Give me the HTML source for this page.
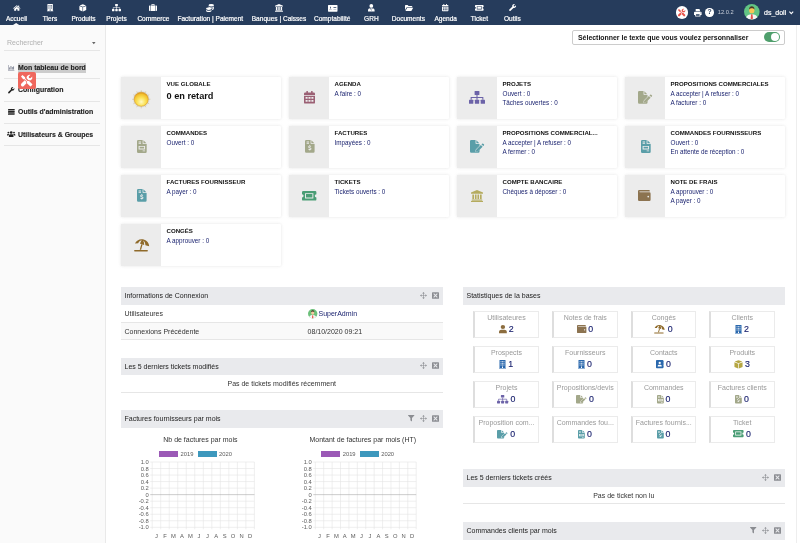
<!DOCTYPE html>
<html lang="fr"><head><meta charset="utf-8"><title>Accueil - Dolibarr 12.0.2</title>
<style>
html,body{margin:0;padding:0;}
body{width:800px;height:543px;overflow:hidden;position:relative;background:#fff;font-family:"Liberation Sans",Arial,sans-serif;font-size:7px;color:#222;}
div,span,a{position:absolute;white-space:nowrap;box-sizing:border-box;}
svg{position:absolute;overflow:visible;}
.top{left:0;top:0;width:800px;height:24.8px;background:#263c5c;}
.mi{color:#fff;font-size:6.55px;-webkit-text-stroke:.2px #fff;top:13.5px;height:9px;line-height:9px;transform:translateX(-50%);}
.side{left:0;top:24.8px;width:105.5px;height:519px;background:#fafafa;border-right:1px solid #e9e9e9;}
.sl{left:4px;width:96px;height:1px;background:#e6e6e6;}
.sm{left:18px;font-weight:bold;font-size:6.95px;-webkit-text-stroke:.12px #222;height:9px;line-height:9px;color:#222;}
.card{width:160.3px;height:41.4px;background:#fff;box-shadow:0 0 3px rgba(160,160,160,.3);border-radius:1px;}
.ci{left:0;top:0;width:40.2px;height:41.4px;background:#ececec;}
.ct{left:45.5px;top:2.9px;font-size:6.1px;font-weight:bold;line-height:8px;color:#111;}
.cl{left:45.5px;font-size:6.3px;line-height:8px;color:#1c2470;}
.bh{height:18px;background:#e9eaed;font-size:7px;line-height:18px;color:#222;padding-left:4px;}
.row{font-size:7px;line-height:17px;height:17.5px;color:#333;border-bottom:1px solid #e6e6e6;}
.st{width:65.5px;height:27.2px;border:1px solid #ebebeb;border-left:2.800px solid #dedede;background:#fff;}
.stl{left:0;width:100%;top:2.2px;text-align:center;font-size:7px;line-height:8px;color:#999;}
.stv{top:11.8px;font-size:8.8px;line-height:11px;color:#1c2470;-webkit-text-stroke:.15px #1c2470;}
.ax{font-size:5.8px;color:#5c5c5c;line-height:6px;}
</style></head><body><div id="wrap" style="left:0;top:0;width:800px;height:543px;will-change:transform">

<div class="top">
<svg style="left:12.70px;top:4.94px;color:#fff" width="7.60" height="5.91" viewBox="0 0 18 14" preserveAspectRatio="none" fill="currentColor"><path d="M9 .4 .2 7.8l1.1 1.3L9 2.7l7.7 6.4 1.1-1.3-3.2-2.7V1.4h-2.1v2z"/><path d="M9 4 2.8 9.1v4.5h4.6V9.9h3.2v3.7h4.6V9.1z"/></svg>
<span class="mi" style="left:16.5px">Accueil</span>
<svg style="left:46.85px;top:4.20px;color:#fff" width="6.30" height="7.20" viewBox="0 0 14 16" preserveAspectRatio="none" fill="currentColor"><path fill-rule="evenodd" d="M1 0h12v15h1v1H0v-1h1zM3.200 2.200v1.600h1.800V2.200zM6.100 2.200v1.600h1.800V2.200zM9 2.200v1.600h1.800V2.200zM3.200 5.400v1.600h1.800V5.400zM6.100 5.400v1.600h1.800V5.400zM9 5.400v1.600h1.800V5.400zM3.200 8.600v1.600h1.800V8.600zM6.100 8.600v1.600h1.800V8.600zM9 8.600v1.600h1.800V8.600zM6 12.200v2.800h2v-2.800z"/></svg>
<span class="mi" style="left:50px">Tiers</span>
<svg style="left:79.20px;top:4.00px;color:#fff" width="7.60" height="7.60" viewBox="0 0 16 16" preserveAspectRatio="none" fill="currentColor"><path d="M8 .3 14.7 3 8 5.9 1.3 3z"/><path d="M.8 4.2 7.4 7v8.8L.8 12.8z"/><path d="M15.2 4.2 8.6 7v8.8l6.6-3z"/></svg>
<span class="mi" style="left:83.5px">Produits</span>
<svg style="left:112.20px;top:4.20px;color:#fff" width="9.00" height="7.20" viewBox="0 0 20 16" preserveAspectRatio="none" fill="currentColor"><rect x="7" y="0" width="6" height="5" rx=".7"/><rect x="0" y="11" width="5.4" height="5" rx=".7"/><rect x="7.3" y="11" width="5.4" height="5" rx=".7"/><rect x="14.6" y="11" width="5.4" height="5" rx=".7"/><path d="M10 5v6M2.7 11V8h14.6v3" fill="none" stroke="currentColor" stroke-width="1.3"/></svg>
<span class="mi" style="left:116.5px">Projets</span>
<svg style="left:149.00px;top:4.40px;color:#fff" width="8.00" height="7.00" viewBox="0 0 16 14" preserveAspectRatio="none" fill="currentColor"><path d="M4.8 3V1.3A1.3 1.3 0 0 1 6.1 0h3.8a1.3 1.3 0 0 1 1.3 1.3V3H9.7V1.5H6.3V3z"/><path d="M1.3 3H3v11H1.3A1.3 1.3 0 0 1 0 12.7V4.3A1.3 1.3 0 0 1 1.3 3z"/><rect x="3.9" y="3" width="8.2" height="11"/><path d="M13 3h1.7A1.3 1.3 0 0 1 16 4.300v8.400a1.3 1.300 0 0 1-1.3 1.300H13z"/></svg>
<span class="mi" style="left:153.4px">Commerce</span>
<svg style="left:206.30px;top:3.80px;color:#fff" width="8.00" height="8.00" viewBox="0 0 16 16" preserveAspectRatio="none" fill="currentColor"><ellipse cx="10.500" cy="2.600" rx="5.500" ry="2.500"/><path d="M5 4.600c.5 1.600 2.800 2.400 5.500 2.400s5-.8 5.500-2.400v2c0 1.400-2.500 2.500-5.500 2.500S5 8 5 6.600z"/><ellipse cx="5.500" cy="9.500" rx="5.500" ry="2.300"/><path d="M0 11.300c.6 1.500 2.800 2.300 5.500 2.300s4.900-.8 5.500-2.300v2.100c0 1.400-2.500 2.500-5.500 2.500S0 14.800 0 13.400z"/><path d="M11.800 9.700c2-.2 3.700-.9 4.200-2v1.900c0 1-1.700 2-4.200 2.300z"/></svg>
<span class="mi" style="left:210.3px">Facturation | Paiement</span>
<svg style="left:274.90px;top:3.90px;color:#fff" width="8.00" height="8.00" viewBox="0 0 16 16" preserveAspectRatio="none" fill="currentColor"><path d="M8 0 16 3.300V5H0V3.300z"/><rect x="1.800" y="6" width="2.200" height="6.200"/><rect x="5.200" y="6" width="2.200" height="6.200"/><rect x="8.600" y="6" width="2.200" height="6.200"/><rect x="12" y="6" width="2.200" height="6.200"/><rect x="1" y="12.700" width="14" height="1.500"/><rect x="0" y="14.600" width="16" height="1.400"/></svg>
<span class="mi" style="left:279px">Banques | Caisses</span>
<svg style="left:327.85px;top:4.58px;color:#fff" width="9.50" height="6.65" viewBox="0 0 20 14" preserveAspectRatio="none" fill="currentColor"><path fill-rule="evenodd" d="M1.200 0h17.600A1.200 1.200 0 0 1 20 1.200v11.600a1.200 1.200 0 0 1-1.200 1.200H1.200A1.200 1.200 0 0 1 0 12.800V1.200A1.200 1.200 0 0 1 1.200 0zM2.500 9.800v1h5.500v-1zM11.500 9.800v1h6v-1zM11.500 4.600v1.600h6V4.600zM4.500 3.500v3.800h1.600V3.500z"/></svg>
<span class="mi" style="left:332.2px">Comptabilité</span>
<svg style="left:367.80px;top:4.03px;color:#fff" width="6.60" height="7.54" viewBox="0 0 14 16" preserveAspectRatio="none" fill="currentColor"><circle cx="7" cy="4" r="4"/><path d="M0 16v-2.300C0 11 2 9.300 4.400 9.200L7 14.500 9.600 9.200C12 9.300 14 11 14 13.700V16z"/><path d="M6 9.200h2l.5 1L7 13.200 5.500 10.200z"/></svg>
<span class="mi" style="left:371.4px">GRH</span>
<svg style="left:404.50px;top:5.04px;color:#fff" width="8.20" height="5.92" viewBox="0 0 18 13" preserveAspectRatio="none" fill="currentColor"><path d="M0 1.500A1.500 1.500 0 0 1 1.500 0h4.300l2 2h6.700A1.500 1.500 0 0 1 16 3.500V5H4.600a2 2 0 0 0-1.800 1.100L0 11.500z"/><path d="M4.800 6H18l-3.300 6.200a1.500 1.500 0 0 1-1.300.8H1z"/></svg>
<span class="mi" style="left:408.4px">Documents</span>
<svg style="left:442.40px;top:4.34px;color:#fff" width="6.40" height="7.31" viewBox="0 0 14 16" preserveAspectRatio="none" fill="currentColor"><path d="M0 3.500A1.500 1.500 0 0 1 1.500 2H3V.4A.4.4 0 0 1 3.400 0h1.200a.4.4 0 0 1 .4.400V2h4V.4A.4.4 0 0 1 9.400 0h1.200a.4.4 0 0 1 .4.400V2h1.500A1.500 1.500 0 0 1 14 3.500V5H0z"/><path fill-rule="evenodd" d="M0 6h14v8.500a1.500 1.500 0 0 1-1.500 1.500h-11A1.500 1.500 0 0 1 0 14.500zM2 7.600v2.200h2.600V7.600zM5.700 7.600v2.200h2.600V7.600zM9.400 7.600v2.200H12V7.600zM2 11.400v2.200h2.600v-2.200zM5.700 11.400v2.200h2.600v-2.200zM9.400 11.400v2.200H12v-2.200z"/></svg>
<span class="mi" style="left:445.7px">Agenda</span>
<svg style="left:475.20px;top:5.13px;color:#fff" width="8.60" height="5.73" viewBox="0 0 18 12" preserveAspectRatio="none" fill="currentColor"><path fill-rule="evenodd" d="M0 1.500A1.500 1.500 0 0 1 1.500 0h15A1.500 1.500 0 0 1 18 1.500V4a2 2 0 0 0 0 4v2.500a1.500 1.500 0 0 1-1.500 1.500h-15A1.500 1.500 0 0 1 0 10.500V8a2 2 0 0 0 0-4zM3.800 2.700v6.600h10.400V2.700zM5 3.900h8v4.200H5z"/></svg>
<span class="mi" style="left:479.4px">Ticket</span>
<svg style="left:508.70px;top:4.40px;color:#fff" width="7.20" height="7.20" viewBox="0 0 16 16" preserveAspectRatio="none" fill="currentColor"><path d="M13.300.5A4.600 4.600 0 0 0 7.200 6L.7 12.500a2 2 0 0 0 2.800 2.800L10 8.800a4.600 4.600 0 0 0 5.500-6.100L12.700 5.500l-2-.3-.3-2z"/></svg>
<span class="mi" style="left:512.4px">Outils</span>
<svg style="left:13.400px;top:22.900px" width="6.200" height="2" viewBox="0 0 62 20"><path d="M0 20 31 0 62 20z" fill="#fafafa"/></svg>
<div style="left:675.8px;top:6.4px;width:12.4px;height:12.4px;border-radius:50%;background:#fff"></div>
<svg style="left:678.30px;top:8.90px;color:#e8534a" width="7.40" height="7.40" viewBox="0 0 16 16" preserveAspectRatio="none" fill="currentColor"><path d="M15.600 12.500 11.800 8.700a2.400 2.400 0 0 0-2.700-.4L5.800 5V3L2 0 0 2l3 3.800h2l3.300 3.300a2.400 2.400 0 0 0 .4 2.700l3.800 3.800a1.200 1.200 0 0 0 1.700 0l1.400-1.400a1.200 1.200 0 0 0 0-1.700z"/><path d="M10.500 6.900c.9 0 1.800.3 2.500.900l.7-.7a4.400 4.400 0 0 0 2.100-5l-2.500 2.500-2.100-.3-.3-2.100L13.400-.3a4.400 4.400 0 0 0-5 2.100 4.400 4.400 0 0 0-.5 2.900l2.300 2.300zM7 9.100 5.300 7.400.6 12.100a2.300 2.300 0 0 0 3.300 3.300l3.800-3.800a3.500 3.500 0 0 1-.7-2.500z"/></svg>
<svg style="left:693.80px;top:8.90px;color:#fff" width="7.60" height="7.60" viewBox="0 0 16 16" preserveAspectRatio="none" fill="currentColor"><path d="M3.500 0h7.300L12.500 1.700V5h-9z"/><path fill-rule="evenodd" d="M1.800 6h12.400A1.800 1.800 0 0 1 16 7.800V12.500h-2.500V16h-11v-3.500H0V7.800A1.800 1.800 0 0 1 1.800 6zM4.300 10.800v3.600h7.400v-3.600zM13.300 7.600a.8.800 0 1 0 0 1.600.8.800 0 0 0 0-1.600z"/></svg>
<div style="left:705.300px;top:8.300px;width:8.400px;height:8.400px;border-radius:50%;background:#fff"></div>
<span style="left:705.300px;top:8.300px;width:8.400px;height:8.400px;line-height:8.800px;text-align:center;font-size:6.800px;font-weight:bold;color:#263c5c">?</span>
<span style="left:717.800px;top:9.100px;font-size:5.700px;line-height:7px;color:#c9cfda">12.0.2</span>
<svg style="left:743.800px;top:4.400px" width="15.600" height="15.600" viewBox="0 0 16 16"><circle cx="8" cy="8" r="8" fill="#62c584"/><path d="M2.2 13.5C3 11.300 5 10.400 8 10.400s5 .9 5.800 3.100A8 8 0 0 1 8 16a8 8 0 0 1-5.800-2.500z" fill="#f4f4f4"/><path d="M7.300 10.500h1.400l.5 4.500-1.200 1-1.200-1z" fill="#e8534a"/><ellipse cx="8" cy="6.300" rx="2.700" ry="3.300" fill="#f8c756"/><path d="M5.200 5.600C5.200 3 6.500 2.200 8 2.200s2.800.8 2.800 3.400C10 4.600 9 4.300 8 4.300s-2 .3-2.800 1.300z" fill="#4a3a2a"/></svg>
<span style="left:764px;top:8.100px;font-size:7px;line-height:9px;color:#fff;-webkit-text-stroke:.2px #fff">ds_doli</span>
<svg style="left:789.200px;top:10.800px" width="4.600" height="3.400" viewBox="0 0 46 34"><path d="M4 6 23 26 42 6" fill="none" stroke="#fff" stroke-width="11"/></svg>
</div>
<div class="side">
<span style="left:7px;top:13.7px;font-size:7px;color:#b0b0b0;line-height:9px">Rechercher</span>
<svg style="left:91.7px;top:17.500px" width="3.600" height="2.200" viewBox="0 0 36 22"><path d="M0 0H36L18 22z" fill="#666"/></svg>
<div class="sl" style="top:24.8px"></div>
<div class="sl" style="top:53.1px"></div>
<div class="sl" style="top:76.1px"></div>
<div class="sl" style="top:98.2px"></div>
<div class="sl" style="top:120.3px"></div>
<span style="left:17.800px;top:38.500px;width:68.200px;height:9.300px;background:#ccc"></span>
<svg style="left:8.00px;top:40.10px;color:#7a7f90" width="6.40" height="5.60" viewBox="0 0 16 14" preserveAspectRatio="none" fill="currentColor"><path d="M0 0h1.300v12.700H16V14H0z"/><rect x="3" y="6" width="2.200" height="5.500"/><rect x="6.300" y="2.500" width="2.200" height="9"/><rect x="9.600" y="5" width="2.200" height="6.500"/><rect x="12.900" y="3.500" width="2.200" height="8"/></svg>
<span class="sm" style="top:38.1px">Mon tableau de bord</span>
<svg style="left:7.75px;top:61.85px;color:#222" width="6.50" height="6.50" viewBox="0 0 16 16" preserveAspectRatio="none" fill="currentColor"><path d="M13.300.5A4.600 4.600 0 0 0 7.200 6L.7 12.500a2 2 0 0 0 2.800 2.800L10 8.800a4.600 4.600 0 0 0 5.500-6.100L12.700 5.500l-2-.3-.3-2z"/></svg>
<span class="sm" style="top:60.4px">Configuration</span>
<svg style="left:7.70px;top:84.41px;color:#222" width="6.60" height="5.77" viewBox="0 0 16 14" preserveAspectRatio="none" fill="currentColor"><rect x="0" y="0" width="16" height="3.800" rx=".6"/><rect x="0" y="5.100" width="16" height="3.800" rx=".6"/><rect x="0" y="10.200" width="16" height="3.800" rx=".6"/></svg>
<span class="sm" style="top:82.6px">Outils d'administration</span>
<svg style="left:6.80px;top:106.56px;color:#222" width="8.40" height="5.88" viewBox="0 0 20 14" preserveAspectRatio="none" fill="currentColor"><circle cx="10" cy="3.500" r="3.200"/><path d="M4.500 14v-2.200C4.500 9.400 6.300 8 8.300 8h3.400c2 0 3.800 1.400 3.800 3.800V14z"/><circle cx="3.300" cy="3.800" r="2.200"/><circle cx="16.700" cy="3.800" r="2.200"/><path d="M0 11V9.800C0 8.300 1 7.200 2.500 7.200h1.600c.5 0 1 .1 1.400.4C4.300 8.300 3.500 9.600 3.400 11zM20 11V9.800c0-1.500-1-2.600-2.500-2.600h-1.600c-.5 0-1 .1-1.400.4 1.200.7 2 2 2.100 3.400z"/></svg>
<span class="sm" style="top:104.8px">Utilisateurs &amp; Groupes</span>
<div style="left:18px;top:47.200px;width:18px;height:17.500px;background:#ef675d;border-radius:2px"></div>
<svg style="left:21.40px;top:49.90px;color:#fff" width="11.40" height="11.40" viewBox="0 0 16 16" preserveAspectRatio="none" fill="currentColor"><path d="M15.600 12.500 11.800 8.700a2.400 2.400 0 0 0-2.700-.4L5.800 5V3L2 0 0 2l3 3.800h2l3.300 3.300a2.400 2.400 0 0 0 .4 2.700l3.800 3.800a1.200 1.200 0 0 0 1.700 0l1.400-1.400a1.200 1.200 0 0 0 0-1.700z"/><path d="M10.500 6.900c.9 0 1.800.3 2.500.900l.7-.7a4.400 4.400 0 0 0 2.100-5l-2.500 2.500-2.100-.3-.3-2.100L13.400-.3a4.400 4.400 0 0 0-5 2.100 4.400 4.400 0 0 0-.5 2.900l2.300 2.300zM7 9.100 5.300 7.400.6 12.100a2.300 2.300 0 0 0 3.300 3.300l3.800-3.800a3.500 3.500 0 0 1-.7-2.500z"/></svg>
</div>
<div style="left:795.600px;top:24.800px;width:1px;height:519px;background:#eee"></div>
<div style="left:572px;top:30px;width:213px;height:14.5px;border:1px solid #ccc;border-radius:2px;background:#fff"></div>
<span style="left:578px;top:32.5px;font-size:6.93px;font-weight:bold;line-height:9px;color:#111">Sélectionner le texte que vous voulez personnaliser</span>
<div style="left:763.5px;top:32.4px;width:16.5px;height:9.6px;border-radius:5px;background:#4f9f6c"></div>
<div style="left:771.3px;top:33.4px;width:7.6px;height:7.6px;border-radius:4px;background:#fff"></div>
<div class="card" style="left:121px;top:77.2px"><div class="ci"></div>
<svg style="left:11.100px;top:12.700px" width="18.500" height="18.500" viewBox="-10 -10 20 20"><defs><radialGradient id="sg" cx="50%" cy="68%" r="62%"><stop offset="0" stop-color="#fff9c4"/><stop offset=".45" stop-color="#fbe45e"/><stop offset=".85" stop-color="#f4c22e"/><stop offset="1" stop-color="#e0a024"/></radialGradient></defs><line x1="0" y1="-7.500" x2="0" y2="-10" stroke="#c9b98a" stroke-width=".7" opacity=".7" transform="rotate(0)"/><line x1="0" y1="-7.500" x2="0" y2="-10" stroke="#c9b98a" stroke-width=".7" opacity=".7" transform="rotate(30)"/><line x1="0" y1="-7.500" x2="0" y2="-10" stroke="#c9b98a" stroke-width=".7" opacity=".7" transform="rotate(60)"/><line x1="0" y1="-7.500" x2="0" y2="-10" stroke="#c9b98a" stroke-width=".7" opacity=".7" transform="rotate(90)"/><line x1="0" y1="-7.500" x2="0" y2="-10" stroke="#c9b98a" stroke-width=".7" opacity=".7" transform="rotate(120)"/><line x1="0" y1="-7.500" x2="0" y2="-10" stroke="#c9b98a" stroke-width=".7" opacity=".7" transform="rotate(150)"/><line x1="0" y1="-7.500" x2="0" y2="-10" stroke="#c9b98a" stroke-width=".7" opacity=".7" transform="rotate(180)"/><line x1="0" y1="-7.500" x2="0" y2="-10" stroke="#c9b98a" stroke-width=".7" opacity=".7" transform="rotate(210)"/><line x1="0" y1="-7.500" x2="0" y2="-10" stroke="#c9b98a" stroke-width=".7" opacity=".7" transform="rotate(240)"/><line x1="0" y1="-7.500" x2="0" y2="-10" stroke="#c9b98a" stroke-width=".7" opacity=".7" transform="rotate(270)"/><line x1="0" y1="-7.500" x2="0" y2="-10" stroke="#c9b98a" stroke-width=".7" opacity=".7" transform="rotate(300)"/><line x1="0" y1="-7.500" x2="0" y2="-10" stroke="#c9b98a" stroke-width=".7" opacity=".7" transform="rotate(330)"/><circle r="9" fill="#8a8a7a" opacity=".13"/><circle r="7.600" fill="url(#sg)" stroke="#d9971f" stroke-width=".6"/></svg>
<span class="ct">VUE GLOBALE</span>
<span style="left:45.5px;top:14px;font-size:9.2px;font-weight:bold;line-height:11px;color:#111">0 en retard</span>
</div>
<div class="card" style="left:289px;top:77.2px"><div class="ci"></div>
<svg style="left:14.80px;top:14.21px;color:#9b6074" width="11.00" height="12.57" viewBox="0 0 14 16" preserveAspectRatio="none" fill="currentColor"><path d="M0 3.500A1.500 1.500 0 0 1 1.500 2H3V.4A.4.4 0 0 1 3.400 0h1.200a.4.4 0 0 1 .4.400V2h4V.4A.4.4 0 0 1 9.400 0h1.200a.4.4 0 0 1 .4.400V2h1.500A1.500 1.500 0 0 1 14 3.500V5H0z"/><path fill-rule="evenodd" d="M0 6h14v8.500a1.500 1.500 0 0 1-1.500 1.500h-11A1.500 1.500 0 0 1 0 14.500zM2 7.600v2.200h2.600V7.600zM5.700 7.600v2.200h2.600V7.600zM9.400 7.600v2.200H12V7.600zM2 11.400v2.200h2.600v-2.200zM5.700 11.400v2.200h2.600v-2.200zM9.400 11.400v2.200H12v-2.200z"/></svg>
<span class="ct">AGENDA</span>
<span class="cl" style="top:13.20px">A faire : 0</span>
</div>
<div class="card" style="left:457px;top:77.2px"><div class="ci"></div>
<svg style="left:12.00px;top:14.20px;color:#6c63a8" width="16.00" height="12.80" viewBox="0 0 20 16" preserveAspectRatio="none" fill="currentColor"><rect x="7" y="0" width="6" height="5" rx=".7"/><rect x="0" y="11" width="5.4" height="5" rx=".7"/><rect x="7.3" y="11" width="5.4" height="5" rx=".7"/><rect x="14.6" y="11" width="5.4" height="5" rx=".7"/><path d="M10 5v6M2.7 11V8h14.6v3" fill="none" stroke="currentColor" stroke-width="1.3"/></svg>
<span class="ct">PROJETS</span>
<span class="cl" style="top:13.20px">Ouvert : 0</span>
<span class="cl" style="top:21.90px">Tâches ouvertes : 0</span>
</div>
<div class="card" style="left:625px;top:77.2px"><div class="ci"></div>
<svg style="left:12.55px;top:14.14px;color:#a3a88a" width="14.30" height="12.71" viewBox="0 0 18 16" preserveAspectRatio="none" fill="currentColor"><path d="M0 1.500A1.500 1.500 0 0 1 1.500 0H7V4.200a.8.8 0 0 0 .8.8H12v2.300L7.300 12l-.5 2.900 2.900-.5L12 12.100v2.400a1.500 1.500 0 0 1-1.500 1.500h-9A1.500 1.500 0 0 1 0 14.500z"/><path d="M8 .3 11.7 4H8z"/><path d="M15.300 4.600a.9.900 0 0 1 1.300 0l.9.900a.9.900 0 0 1 0 1.300l-.9.900-2.200-2.200zM13.700 6.200l2.200 2.200-6 6-2.500.4.400-2.500z"/></svg>
<span class="ct">PROPOSITIONS COMMERCIALES</span>
<span class="cl" style="top:13.20px">A accepter | A refuser : 0</span>
<span class="cl" style="top:21.90px">A facturer : 0</span>
</div>
<div class="card" style="left:121px;top:126.2px"><div class="ci"></div>
<svg style="left:15.55px;top:14.13px;color:#a3a88a" width="9.70" height="12.93" viewBox="0 0 12 16" preserveAspectRatio="none" fill="currentColor"><path fill-rule="evenodd" d="M0 1.5A1.5 1.5 0 0 1 1.5 0H7V4.2a.8.8 0 0 0 .8.8H12V14.5a1.5 1.5 0 0 1-1.5 1.5h-9A1.5 1.5 0 0 1 0 14.5zM2 2v1h3V2zM2 4v1h3V4zM2 7.300v4.400h8V7.300zM3.200 8.500h5.600v2H3.200zM7 13v1h3v-1z"/><path d="M8 .3 11.7 4H8z"/></svg>
<span class="ct">COMMANDES</span>
<span class="cl" style="top:13.20px">Ouvert : 0</span>
</div>
<div class="card" style="left:289px;top:126.2px"><div class="ci"></div>
<svg style="left:15.50px;top:14.20px;color:#a3a88a" width="9.60" height="12.80" viewBox="0 0 12 16" preserveAspectRatio="none" fill="currentColor"><path fill-rule="evenodd" d="M0 1.5A1.5 1.5 0 0 1 1.5 0H7V4.2a.8.8 0 0 0 .8.8H12V14.5a1.5 1.5 0 0 1-1.5 1.5h-9A1.5 1.5 0 0 1 0 14.5zM2 2v1h3V2zM2 4v1h3V4zM5.500 6.300v.8C4.600 7.300 4 7.900 4 8.700c0 1.900 3 1.300 3 2.200 0 .6-1.500.6-2.400 0l-.6.900c.4.300 1 .5 1.500.6v.8h1v-.8c1-.2 1.600-.8 1.600-1.600 0-2-3-1.400-3-2.200 0-.5 1.300-.5 2.100 0l.6-.9c-.4-.2-.8-.400-1.300-.5v-.9z"/><path d="M8 .3 11.7 4H8z"/></svg>
<span class="ct">FACTURES</span>
<span class="cl" style="top:13.20px">Impayées : 0</span>
</div>
<div class="card" style="left:457px;top:126.2px"><div class="ci"></div>
<svg style="left:12.85px;top:14.14px;color:#5a9ea8" width="14.30" height="12.71" viewBox="0 0 18 16" preserveAspectRatio="none" fill="currentColor"><path d="M0 1.500A1.500 1.500 0 0 1 1.500 0H7V4.200a.8.8 0 0 0 .8.8H12v2.300L7.300 12l-.5 2.900 2.900-.5L12 12.100v2.400a1.500 1.500 0 0 1-1.500 1.500h-9A1.500 1.500 0 0 1 0 14.500z"/><path d="M8 .3 11.7 4H8z"/><path d="M15.300 4.600a.9.900 0 0 1 1.300 0l.9.900a.9.900 0 0 1 0 1.300l-.9.900-2.200-2.200zM13.700 6.200l2.200 2.200-6 6-2.500.4.400-2.500z"/></svg>
<span class="ct">PROPOSITIONS COMMERCIAL...</span>
<span class="cl" style="top:13.20px">A accepter | A refuser : 0</span>
<span class="cl" style="top:21.90px">A fermer : 0</span>
</div>
<div class="card" style="left:625px;top:126.2px"><div class="ci"></div>
<svg style="left:15.55px;top:14.13px;color:#5a9ea8" width="9.70" height="12.93" viewBox="0 0 12 16" preserveAspectRatio="none" fill="currentColor"><path fill-rule="evenodd" d="M0 1.5A1.5 1.5 0 0 1 1.5 0H7V4.2a.8.8 0 0 0 .8.8H12V14.5a1.5 1.5 0 0 1-1.5 1.5h-9A1.5 1.5 0 0 1 0 14.5zM2 2v1h3V2zM2 4v1h3V4zM2 7.300v4.400h8V7.300zM3.200 8.500h5.600v2H3.200zM7 13v1h3v-1z"/><path d="M8 .3 11.7 4H8z"/></svg>
<span class="ct">COMMANDES FOURNISSEURS</span>
<span class="cl" style="top:13.20px">Ouvert : 0</span>
<span class="cl" style="top:21.90px">En attente de réception : 0</span>
</div>
<div class="card" style="left:121px;top:175.2px"><div class="ci"></div>
<svg style="left:15.60px;top:14.20px;color:#5a9ea8" width="9.60" height="12.80" viewBox="0 0 12 16" preserveAspectRatio="none" fill="currentColor"><path fill-rule="evenodd" d="M0 1.5A1.5 1.5 0 0 1 1.5 0H7V4.2a.8.8 0 0 0 .8.8H12V14.5a1.5 1.5 0 0 1-1.5 1.5h-9A1.5 1.5 0 0 1 0 14.5zM2 2v1h3V2zM2 4v1h3V4zM5.500 6.300v.8C4.600 7.300 4 7.900 4 8.700c0 1.900 3 1.300 3 2.200 0 .6-1.500.6-2.400 0l-.6.900c.4.300 1 .5 1.500.6v.8h1v-.8c1-.2 1.600-.8 1.600-1.600 0-2-3-1.400-3-2.200 0-.5 1.300-.5 2.100 0l.6-.9c-.4-.2-.8-.400-1.300-.5v-.9z"/><path d="M8 .3 11.7 4H8z"/></svg>
<span class="ct">FACTURES FOURNISSEUR</span>
<span class="cl" style="top:13.20px">A payer : 0</span>
</div>
<div class="card" style="left:289px;top:175.2px"><div class="ci"></div>
<svg style="left:12.80px;top:15.80px;color:#4a9d75" width="14.40" height="9.60" viewBox="0 0 18 12" preserveAspectRatio="none" fill="currentColor"><path fill-rule="evenodd" d="M0 1.500A1.500 1.500 0 0 1 1.500 0h15A1.500 1.500 0 0 1 18 1.500V4a2 2 0 0 0 0 4v2.500a1.500 1.500 0 0 1-1.500 1.500h-15A1.500 1.500 0 0 1 0 10.500V8a2 2 0 0 0 0-4zM3.800 2.700v6.600h10.400V2.700zM5 3.900h8v4.200H5z"/></svg>
<span class="ct">TICKETS</span>
<span class="cl" style="top:13.20px">Tickets ouverts : 0</span>
</div>
<div class="card" style="left:457px;top:175.2px"><div class="ci"></div>
<svg style="left:14.00px;top:14.70px;color:#b5ab5e" width="12.00" height="12.00" viewBox="0 0 16 16" preserveAspectRatio="none" fill="currentColor"><path d="M8 0 16 3.300V5H0V3.300z"/><rect x="1.800" y="6" width="2.200" height="6.200"/><rect x="5.200" y="6" width="2.200" height="6.200"/><rect x="8.600" y="6" width="2.200" height="6.200"/><rect x="12" y="6" width="2.200" height="6.200"/><rect x="1" y="12.700" width="14" height="1.500"/><rect x="0" y="14.600" width="16" height="1.400"/></svg>
<span class="ct">COMPTE BANCAIRE</span>
<span class="cl" style="top:13.20px">Chèques à déposer : 0</span>
</div>
<div class="card" style="left:625px;top:175.2px"><div class="ci"></div>
<svg style="left:13.40px;top:14.99px;color:#8c7350" width="12.60" height="11.03" viewBox="0 0 16 14" preserveAspectRatio="none" fill="currentColor"><path fill-rule="evenodd" d="M1.500 0H14a1 1 0 0 1 1 1v.8H2.200a.5.500 0 0 0 0 1H14.500A1.500 1.500 0 0 1 16 4.300v8.200a1.500 1.500 0 0 1-1.500 1.500h-13A1.500 1.500 0 0 1 0 12.500v-11A1.500 1.500 0 0 1 1.500 0zM13 7.300a1.100 1.100 0 1 0 0 2.200 1.100 1.100 0 0 0 0-2.200z"/></svg>
<span class="ct">NOTE DE FRAIS</span>
<span class="cl" style="top:13.20px">A approuver : 0</span>
<span class="cl" style="top:21.90px">A payer : 0</span>
</div>
<div class="card" style="left:121px;top:224.2px"><div class="ci"></div>
<svg style="left:13.30px;top:14.60px;color:#8f6a2a" width="16.00" height="12.80" viewBox="0 0 20 16" preserveAspectRatio="none" fill="currentColor"><path d="M1.200 5.600C3 1.400 7.600-.7 12.200.6c4 1.100 6.600 4.600 6.800 8.500L14.300 7.800C14.200 5 13 2.700 11.500 1.900 12.300 3.500 12.800 5.500 12.800 7.400L7.600 6C8 4 8.900 2.300 10 1.500 8.200 1.500 6.200 3 5.200 5.400z"/><path d="M10.700 6.900 8.900 13.400H7.200L9.100 6.500z"/><path d="M1 13.800h15.500a.9.900 0 0 1 0 1.800H1a.9.900 0 0 1 0-1.800z"/></svg>
<span class="ct">CONGÉS</span>
<span class="cl" style="top:13.20px">A approuver : 0</span>
</div>
<div class="bh" style="left:120.5px;top:287px;width:322.5px;height:18px;line-height:18px">Informations de Connexion
<svg style="left:299.10px;top:5.00px;color:#8b8d92" width="7.00" height="7.00" viewBox="0 0 16 16" preserveAspectRatio="none" fill="currentColor"><path d="M8 0l3 3.600H8.700v3.700h3.700V5L16 8l-3.600 3V8.700H8.700v3.700H11L8 16l-3-3.600h2.300V8.700H3.600V11L0 8l3.600-3v2.300h3.700V3.600H5z"/></svg>
<svg style="left:311.50px;top:5.00px;color:#8b8d92" width="7.00" height="7.00" viewBox="0 0 16 16" preserveAspectRatio="none" fill="currentColor"><path fill-rule="evenodd" d="M1.500 .5h13A1.500 1.500 0 0 1 16 2v12a1.500 1.500 0 0 1-1.500 1.500h-13A1.500 1.500 0 0 1 0 14V2A1.500 1.500 0 0 1 1.500.5zM4.600 3 3 4.600 6.400 8 3 11.400 4.600 13 8 9.600 11.400 13 13 11.400 9.600 8 13 4.600 11.400 3 8 6.400z"/></svg>
</div>
<div class="row" style="left:120.5px;top:305px;width:322.5px"><span style="left:4px">Utilisateures</span><svg style="left:187px;top:4px" width="9.400" height="9.400" viewBox="0 0 16 16"><circle cx="8" cy="8" r="8" fill="#6cc07a"/><path d="M2.200 13.500C3 11.300 5 10.400 8 10.400s5 .9 5.800 3.100A8 8 0 0 1 8 16a8 8 0 0 1-5.800-2.500z" fill="#f4f4f4"/><path d="M7.300 10.500h1.400l.5 4.500-1.200 1-1.200-1z" fill="#e8534a"/><ellipse cx="8" cy="6.300" rx="2.700" ry="3.300" fill="#f6c9a0"/><path d="M5.200 5.600C5.200 3 6.500 2.200 8 2.200s2.800.8 2.800 3.400C10 4.600 9 4.300 8 4.300s-2 .3-2.800 1.300z" fill="#4a3a2a"/></svg><span style="left:198px;color:#1c2470">SuperAdmin</span></div>
<div class="row" style="left:120.5px;top:322.5px;width:322.5px;background:#f9f9f9"><span style="left:4px">Connexions Précédente</span><span style="left:187.100px">08/10/2020 09:21</span></div>
<div class="bh" style="left:120.5px;top:357.5px;width:322.5px;height:17.5px;line-height:17.5px">Les 5 derniers tickets modifiés
<svg style="left:299.10px;top:4.75px;color:#8b8d92" width="7.00" height="7.00" viewBox="0 0 16 16" preserveAspectRatio="none" fill="currentColor"><path d="M8 0l3 3.600H8.700v3.700h3.700V5L16 8l-3.600 3V8.700H8.700v3.700H11L8 16l-3-3.600h2.300V8.700H3.600V11L0 8l3.600-3v2.300h3.700V3.600H5z"/></svg>
<svg style="left:311.50px;top:4.75px;color:#8b8d92" width="7.00" height="7.00" viewBox="0 0 16 16" preserveAspectRatio="none" fill="currentColor"><path fill-rule="evenodd" d="M1.500 .5h13A1.500 1.500 0 0 1 16 2v12a1.500 1.500 0 0 1-1.500 1.500h-13A1.500 1.500 0 0 1 0 14V2A1.500 1.500 0 0 1 1.500.5zM4.600 3 3 4.600 6.400 8 3 11.400 4.600 13 8 9.600 11.400 13 13 11.400 9.600 8 13 4.600 11.400 3 8 6.400z"/></svg>
</div>
<div class="row" style="left:120.5px;top:375px;width:322.5px;text-align:center"><span style="left:0;width:100%;text-align:center">Pas de tickets modifiés récemment</span></div>
<div class="bh" style="left:120.5px;top:410px;width:322.5px;height:17.7px;line-height:17.7px">Factures fournisseurs par mois
<svg style="left:287.60px;top:5.15px;color:#8b8d92" width="6.40" height="6.40" viewBox="0 0 16 16" preserveAspectRatio="none" fill="currentColor"><path d="M.6 0h14.800a.6.600 0 0 1 .45 1L10 7.600V15.300a.6.600 0 0 1-1 .5L6.300 13.700a.8.800 0 0 1-.3-.6V7.600L.15 1A.6.600 0 0 1 .6 0z"/></svg>
<svg style="left:299.10px;top:4.85px;color:#8b8d92" width="7.00" height="7.00" viewBox="0 0 16 16" preserveAspectRatio="none" fill="currentColor"><path d="M8 0l3 3.600H8.700v3.700h3.700V5L16 8l-3.600 3V8.700H8.700v3.700H11L8 16l-3-3.600h2.300V8.700H3.600V11L0 8l3.600-3v2.300h3.700V3.600H5z"/></svg>
<svg style="left:311.50px;top:4.85px;color:#8b8d92" width="7.00" height="7.00" viewBox="0 0 16 16" preserveAspectRatio="none" fill="currentColor"><path fill-rule="evenodd" d="M1.500 .5h13A1.500 1.500 0 0 1 16 2v12a1.500 1.500 0 0 1-1.500 1.500h-13A1.500 1.500 0 0 1 0 14V2A1.500 1.500 0 0 1 1.500.5zM4.600 3 3 4.600 6.400 8 3 11.400 4.600 13 8 9.600 11.400 13 13 11.400 9.600 8 13 4.600 11.400 3 8 6.400z"/></svg>
</div>
<span style="left:200.4px;top:434.500px;font-size:7px;line-height:9px;color:#333;transform:translateX(-50%)">Nb de factures par mois</span>
<div style="left:159.3px;top:451.4px;width:19px;height:5.2px;background:#9b59b6"></div>
<span class="ax" style="left:180.60000000000002px;top:450.6px">2019</span>
<div style="left:197.8px;top:451.4px;width:19px;height:5.2px;background:#3d98bd"></div>
<span class="ax" style="left:219.10000000000002px;top:450.6px">2020</span>
<svg style="left:0;top:0" width="800" height="543">
<line x1="152.20" y1="462" x2="152.20" y2="529.3" stroke="#e4e4e4" stroke-width="0.6"/>
<line x1="160.72" y1="462" x2="160.72" y2="529.3" stroke="#e4e4e4" stroke-width="0.6"/>
<line x1="169.23" y1="462" x2="169.23" y2="529.3" stroke="#e4e4e4" stroke-width="0.6"/>
<line x1="177.75" y1="462" x2="177.75" y2="529.3" stroke="#e4e4e4" stroke-width="0.6"/>
<line x1="186.27" y1="462" x2="186.27" y2="529.3" stroke="#e4e4e4" stroke-width="0.6"/>
<line x1="194.78" y1="462" x2="194.78" y2="529.3" stroke="#e4e4e4" stroke-width="0.6"/>
<line x1="203.30" y1="462" x2="203.30" y2="529.3" stroke="#e4e4e4" stroke-width="0.6"/>
<line x1="211.82" y1="462" x2="211.82" y2="529.3" stroke="#e4e4e4" stroke-width="0.6"/>
<line x1="220.33" y1="462" x2="220.33" y2="529.3" stroke="#e4e4e4" stroke-width="0.6"/>
<line x1="228.85" y1="462" x2="228.85" y2="529.3" stroke="#e4e4e4" stroke-width="0.6"/>
<line x1="237.37" y1="462" x2="237.37" y2="529.3" stroke="#e4e4e4" stroke-width="0.6"/>
<line x1="245.88" y1="462" x2="245.88" y2="529.3" stroke="#e4e4e4" stroke-width="0.6"/>
<line x1="254.40" y1="462" x2="254.40" y2="529.3" stroke="#e4e4e4" stroke-width="0.6"/>
<line x1="150.2" y1="462.00" x2="254.39999999999998" y2="462.00" stroke="#e4e4e4" stroke-width="0.6"/>
<line x1="150.2" y1="468.53" x2="254.39999999999998" y2="468.53" stroke="#e4e4e4" stroke-width="0.6"/>
<line x1="150.2" y1="475.06" x2="254.39999999999998" y2="475.06" stroke="#e4e4e4" stroke-width="0.6"/>
<line x1="150.2" y1="481.59" x2="254.39999999999998" y2="481.59" stroke="#e4e4e4" stroke-width="0.6"/>
<line x1="150.2" y1="488.12" x2="254.39999999999998" y2="488.12" stroke="#e4e4e4" stroke-width="0.6"/>
<line x1="150.2" y1="494.65" x2="254.39999999999998" y2="494.65" stroke="#aaa" stroke-width="0.6"/>
<line x1="150.2" y1="501.18" x2="254.39999999999998" y2="501.18" stroke="#e4e4e4" stroke-width="0.6"/>
<line x1="150.2" y1="507.71" x2="254.39999999999998" y2="507.71" stroke="#e4e4e4" stroke-width="0.6"/>
<line x1="150.2" y1="514.24" x2="254.39999999999998" y2="514.24" stroke="#e4e4e4" stroke-width="0.6"/>
<line x1="150.2" y1="520.77" x2="254.39999999999998" y2="520.77" stroke="#e4e4e4" stroke-width="0.6"/>
<line x1="150.2" y1="527.30" x2="254.39999999999998" y2="527.30" stroke="#e4e4e4" stroke-width="0.6"/>
</svg>
<span class="ax" style="left:118.69999999999999px;width:30px;text-align:right;top:459.00px">1.0</span>
<span class="ax" style="left:118.69999999999999px;width:30px;text-align:right;top:465.53px">0.8</span>
<span class="ax" style="left:118.69999999999999px;width:30px;text-align:right;top:472.06px">0.6</span>
<span class="ax" style="left:118.69999999999999px;width:30px;text-align:right;top:478.59px">0.4</span>
<span class="ax" style="left:118.69999999999999px;width:30px;text-align:right;top:485.12px">0.2</span>
<span class="ax" style="left:118.69999999999999px;width:30px;text-align:right;top:491.65px">0</span>
<span class="ax" style="left:118.69999999999999px;width:30px;text-align:right;top:498.18px">-0.2</span>
<span class="ax" style="left:118.69999999999999px;width:30px;text-align:right;top:504.71px">-0.4</span>
<span class="ax" style="left:118.69999999999999px;width:30px;text-align:right;top:511.24px">-0.6</span>
<span class="ax" style="left:118.69999999999999px;width:30px;text-align:right;top:517.77px">-0.8</span>
<span class="ax" style="left:118.69999999999999px;width:30px;text-align:right;top:524.30px">-1.0</span>
<span class="ax" style="left:156.46px;top:532.5px;transform:translateX(-50%)">J</span>
<span class="ax" style="left:164.97px;top:532.5px;transform:translateX(-50%)">F</span>
<span class="ax" style="left:173.49px;top:532.5px;transform:translateX(-50%)">M</span>
<span class="ax" style="left:182.01px;top:532.5px;transform:translateX(-50%)">A</span>
<span class="ax" style="left:190.52px;top:532.5px;transform:translateX(-50%)">M</span>
<span class="ax" style="left:199.04px;top:532.5px;transform:translateX(-50%)">J</span>
<span class="ax" style="left:207.56px;top:532.5px;transform:translateX(-50%)">J</span>
<span class="ax" style="left:216.07px;top:532.5px;transform:translateX(-50%)">A</span>
<span class="ax" style="left:224.59px;top:532.5px;transform:translateX(-50%)">S</span>
<span class="ax" style="left:233.11px;top:532.5px;transform:translateX(-50%)">O</span>
<span class="ax" style="left:241.62px;top:532.5px;transform:translateX(-50%)">N</span>
<span class="ax" style="left:250.14px;top:532.5px;transform:translateX(-50%)">D</span>
<span style="left:362.8px;top:434.500px;font-size:7px;line-height:9px;color:#333;transform:translateX(-50%)">Montant de factures par mois (HT)</span>
<div style="left:321.4px;top:451.4px;width:19px;height:5.2px;background:#9b59b6"></div>
<span class="ax" style="left:342.7px;top:450.6px">2019</span>
<div style="left:359.9px;top:451.4px;width:19px;height:5.2px;background:#3d98bd"></div>
<span class="ax" style="left:381.2px;top:450.6px">2020</span>
<svg style="left:0;top:0" width="800" height="543">
<line x1="315.30" y1="462" x2="315.30" y2="529.3" stroke="#e4e4e4" stroke-width="0.6"/>
<line x1="323.71" y1="462" x2="323.71" y2="529.3" stroke="#e4e4e4" stroke-width="0.6"/>
<line x1="332.12" y1="462" x2="332.12" y2="529.3" stroke="#e4e4e4" stroke-width="0.6"/>
<line x1="340.53" y1="462" x2="340.53" y2="529.3" stroke="#e4e4e4" stroke-width="0.6"/>
<line x1="348.93" y1="462" x2="348.93" y2="529.3" stroke="#e4e4e4" stroke-width="0.6"/>
<line x1="357.34" y1="462" x2="357.34" y2="529.3" stroke="#e4e4e4" stroke-width="0.6"/>
<line x1="365.75" y1="462" x2="365.75" y2="529.3" stroke="#e4e4e4" stroke-width="0.6"/>
<line x1="374.16" y1="462" x2="374.16" y2="529.3" stroke="#e4e4e4" stroke-width="0.6"/>
<line x1="382.57" y1="462" x2="382.57" y2="529.3" stroke="#e4e4e4" stroke-width="0.6"/>
<line x1="390.98" y1="462" x2="390.98" y2="529.3" stroke="#e4e4e4" stroke-width="0.6"/>
<line x1="399.38" y1="462" x2="399.38" y2="529.3" stroke="#e4e4e4" stroke-width="0.6"/>
<line x1="407.79" y1="462" x2="407.79" y2="529.3" stroke="#e4e4e4" stroke-width="0.6"/>
<line x1="416.20" y1="462" x2="416.20" y2="529.3" stroke="#e4e4e4" stroke-width="0.6"/>
<line x1="313.3" y1="462.00" x2="416.20000000000005" y2="462.00" stroke="#e4e4e4" stroke-width="0.6"/>
<line x1="313.3" y1="468.53" x2="416.20000000000005" y2="468.53" stroke="#e4e4e4" stroke-width="0.6"/>
<line x1="313.3" y1="475.06" x2="416.20000000000005" y2="475.06" stroke="#e4e4e4" stroke-width="0.6"/>
<line x1="313.3" y1="481.59" x2="416.20000000000005" y2="481.59" stroke="#e4e4e4" stroke-width="0.6"/>
<line x1="313.3" y1="488.12" x2="416.20000000000005" y2="488.12" stroke="#e4e4e4" stroke-width="0.6"/>
<line x1="313.3" y1="494.65" x2="416.20000000000005" y2="494.65" stroke="#aaa" stroke-width="0.6"/>
<line x1="313.3" y1="501.18" x2="416.20000000000005" y2="501.18" stroke="#e4e4e4" stroke-width="0.6"/>
<line x1="313.3" y1="507.71" x2="416.20000000000005" y2="507.71" stroke="#e4e4e4" stroke-width="0.6"/>
<line x1="313.3" y1="514.24" x2="416.20000000000005" y2="514.24" stroke="#e4e4e4" stroke-width="0.6"/>
<line x1="313.3" y1="520.77" x2="416.20000000000005" y2="520.77" stroke="#e4e4e4" stroke-width="0.6"/>
<line x1="313.3" y1="527.30" x2="416.20000000000005" y2="527.30" stroke="#e4e4e4" stroke-width="0.6"/>
</svg>
<span class="ax" style="left:281.8px;width:30px;text-align:right;top:459.00px">1.0</span>
<span class="ax" style="left:281.8px;width:30px;text-align:right;top:465.53px">0.8</span>
<span class="ax" style="left:281.8px;width:30px;text-align:right;top:472.06px">0.6</span>
<span class="ax" style="left:281.8px;width:30px;text-align:right;top:478.59px">0.4</span>
<span class="ax" style="left:281.8px;width:30px;text-align:right;top:485.12px">0.2</span>
<span class="ax" style="left:281.8px;width:30px;text-align:right;top:491.65px">0</span>
<span class="ax" style="left:281.8px;width:30px;text-align:right;top:498.18px">-0.2</span>
<span class="ax" style="left:281.8px;width:30px;text-align:right;top:504.71px">-0.4</span>
<span class="ax" style="left:281.8px;width:30px;text-align:right;top:511.24px">-0.6</span>
<span class="ax" style="left:281.8px;width:30px;text-align:right;top:517.77px">-0.8</span>
<span class="ax" style="left:281.8px;width:30px;text-align:right;top:524.30px">-1.0</span>
<span class="ax" style="left:319.50px;top:532.5px;transform:translateX(-50%)">J</span>
<span class="ax" style="left:327.91px;top:532.5px;transform:translateX(-50%)">F</span>
<span class="ax" style="left:336.32px;top:532.5px;transform:translateX(-50%)">M</span>
<span class="ax" style="left:344.73px;top:532.5px;transform:translateX(-50%)">A</span>
<span class="ax" style="left:353.14px;top:532.5px;transform:translateX(-50%)">M</span>
<span class="ax" style="left:361.55px;top:532.5px;transform:translateX(-50%)">J</span>
<span class="ax" style="left:369.95px;top:532.5px;transform:translateX(-50%)">J</span>
<span class="ax" style="left:378.36px;top:532.5px;transform:translateX(-50%)">A</span>
<span class="ax" style="left:386.77px;top:532.5px;transform:translateX(-50%)">S</span>
<span class="ax" style="left:395.18px;top:532.5px;transform:translateX(-50%)">O</span>
<span class="ax" style="left:403.59px;top:532.5px;transform:translateX(-50%)">N</span>
<span class="ax" style="left:412.00px;top:532.5px;transform:translateX(-50%)">D</span>
<div class="bh" style="left:462.5px;top:287px;width:322.5px;height:18px;line-height:18px">Statistiques de la bases
</div>
<div class="st" style="left:473.25px;top:311.2px"><span class="stl">Utilisateures</span>
<svg style="left:23.50px;top:12.90px;color:#8c6d3f" width="7.80" height="8.20" viewBox="0 0 14 16" preserveAspectRatio="none" fill="currentColor"><circle cx="7" cy="4" r="4"/><path d="M0 16v-2.500C0 11 2 9.300 4.500 9.300h5c2.500 0 4.500 1.700 4.500 4.200V16z"/></svg>
<span class="stv" style="left:33.50px">2</span></div>
<div class="st" style="left:552px;top:311.2px"><span class="stl">Notes de frais</span>
<svg style="left:22.70px;top:13.00px;color:#8c7350" width="9.40" height="8.00" viewBox="0 0 16 14" preserveAspectRatio="none" fill="currentColor"><path fill-rule="evenodd" d="M1.500 0H14a1 1 0 0 1 1 1v.8H2.200a.5.500 0 0 0 0 1H14.500A1.500 1.500 0 0 1 16 4.300v8.200a1.500 1.500 0 0 1-1.500 1.500h-13A1.500 1.500 0 0 1 0 12.500v-11A1.500 1.500 0 0 1 1.500 0zM13 7.300a1.100 1.100 0 1 0 0 2.200 1.100 1.100 0 0 0 0-2.200z"/></svg>
<span class="stv" style="left:34.30px">0</span></div>
<div class="st" style="left:630.5px;top:311.2px"><span class="stl">Congés</span>
<svg style="left:21.80px;top:12.60px;color:#8f6a2a" width="11.20" height="8.80" viewBox="0 0 20 16" preserveAspectRatio="none" fill="currentColor"><path d="M1.200 5.600C3 1.400 7.600-.7 12.200.6c4 1.100 6.600 4.600 6.800 8.500L14.300 7.800C14.200 5 13 2.700 11.500 1.900 12.300 3.500 12.800 5.500 12.800 7.400L7.600 6C8 4 8.900 2.300 10 1.500 8.200 1.500 6.200 3 5.200 5.400z"/><path d="M10.700 6.900 8.900 13.400H7.200L9.100 6.500z"/><path d="M1 13.800h15.500a.9.900 0 0 1 0 1.800H1a.9.900 0 0 1 0-1.800z"/></svg>
<span class="stv" style="left:35.20px">0</span></div>
<div class="st" style="left:709px;top:311.2px"><span class="stl">Clients</span>
<svg style="left:23.90px;top:12.75px;color:#2a68ad" width="7.00" height="8.50" viewBox="0 0 14 16" preserveAspectRatio="none" fill="currentColor"><path fill-rule="evenodd" d="M1 0h12v15h1v1H0v-1h1zM3.200 2.200v1.600h1.800V2.200zM6.100 2.200v1.600h1.800V2.200zM9 2.200v1.600h1.800V2.200zM3.200 5.400v1.600h1.800V5.400zM6.100 5.400v1.600h1.800V5.400zM9 5.400v1.600h1.800V5.400zM3.200 8.600v1.600h1.800V8.600zM6.100 8.600v1.600h1.800V8.600zM9 8.600v1.600h1.800V8.600zM6 12.200v2.800h2v-2.800z"/></svg>
<span class="stv" style="left:33.10px">2</span></div>
<div class="st" style="left:473.25px;top:346.1px"><span class="stl">Prospects</span>
<svg style="left:23.90px;top:12.75px;color:#2a68ad" width="7.00" height="8.50" viewBox="0 0 14 16" preserveAspectRatio="none" fill="currentColor"><path fill-rule="evenodd" d="M1 0h12v15h1v1H0v-1h1zM3.200 2.200v1.600h1.800V2.200zM6.100 2.200v1.600h1.800V2.200zM9 2.200v1.600h1.800V2.200zM3.200 5.400v1.600h1.800V5.400zM6.100 5.400v1.600h1.800V5.400zM9 5.400v1.600h1.800V5.400zM3.200 8.600v1.600h1.800V8.600zM6.100 8.600v1.600h1.800V8.600zM9 8.600v1.600h1.800V8.600zM6 12.200v2.800h2v-2.800z"/></svg>
<span class="stv" style="left:33.10px">1</span></div>
<div class="st" style="left:552px;top:346.1px"><span class="stl">Fournisseurs</span>
<svg style="left:23.90px;top:12.75px;color:#2a68ad" width="7.00" height="8.50" viewBox="0 0 14 16" preserveAspectRatio="none" fill="currentColor"><path fill-rule="evenodd" d="M1 0h12v15h1v1H0v-1h1zM3.200 2.200v1.600h1.800V2.200zM6.100 2.200v1.600h1.800V2.200zM9 2.200v1.600h1.800V2.200zM3.200 5.400v1.600h1.800V5.400zM6.100 5.400v1.600h1.800V5.400zM9 5.400v1.600h1.800V5.400zM3.200 8.600v1.600h1.800V8.600zM6.100 8.600v1.600h1.800V8.600zM9 8.600v1.600h1.800V8.600zM6 12.200v2.800h2v-2.800z"/></svg>
<span class="stv" style="left:33.10px">0</span></div>
<div class="st" style="left:630.5px;top:346.1px"><span class="stl">Contacts</span>
<svg style="left:23.40px;top:12.85px;color:#2a68ad" width="8.00" height="8.30" viewBox="0 0 14 16" preserveAspectRatio="none" fill="currentColor"><path fill-rule="evenodd" d="M1.500 0h10A1.500 1.500 0 0 1 13 1.500v13a1.500 1.500 0 0 1-1.500 1.500h-10A1.500 1.500 0 0 1 0 14.500v-13A1.500 1.500 0 0 1 1.500 0zM6.500 3.600a2 2 0 1 0 0 4 2 2 0 0 0 0-4zM3 12.300h7v-.8c0-1.500-1.200-2.500-2.500-2.500h-2C4.200 9 3 10 3 11.500z"/><path d="M13.400 2h.6v2.800h-.6zM13.400 6.500h.6v2.800h-.6zM13.400 11h.6v2.800h-.6z"/></svg>
<span class="stv" style="left:33.60px">0</span></div>
<div class="st" style="left:709px;top:346.1px"><span class="stl">Produits</span>
<svg style="left:22.90px;top:12.70px;color:#b5a642" width="9.00" height="8.60" viewBox="0 0 16 16" preserveAspectRatio="none" fill="currentColor"><path d="M8 .3 14.7 3 8 5.9 1.3 3z"/><path d="M.8 4.2 7.4 7v8.8L.8 12.8z"/><path d="M15.2 4.2 8.6 7v8.8l6.6-3z"/></svg>
<span class="stv" style="left:34.10px">3</span></div>
<div class="st" style="left:473.25px;top:381px"><span class="stl">Projets</span>
<svg style="left:21.80px;top:12.80px;color:#6c63a8" width="11.20" height="8.40" viewBox="0 0 20 16" preserveAspectRatio="none" fill="currentColor"><rect x="7" y="0" width="6" height="5" rx=".7"/><rect x="0" y="11" width="5.4" height="5" rx=".7"/><rect x="7.3" y="11" width="5.4" height="5" rx=".7"/><rect x="14.6" y="11" width="5.4" height="5" rx=".7"/><path d="M10 5v6M2.7 11V8h14.6v3" fill="none" stroke="currentColor" stroke-width="1.3"/></svg>
<span class="stv" style="left:35.20px">0</span></div>
<div class="st" style="left:552px;top:381px"><span class="stl">Propositions/devis</span>
<svg style="left:22.05px;top:12.75px;color:#a3a88a" width="10.70" height="8.50" viewBox="0 0 18 16" preserveAspectRatio="none" fill="currentColor"><path d="M0 1.500A1.500 1.500 0 0 1 1.500 0H7V4.200a.8.8 0 0 0 .8.8H12v2.300L7.300 12l-.5 2.900 2.900-.5L12 12.100v2.400a1.500 1.500 0 0 1-1.500 1.500h-9A1.500 1.500 0 0 1 0 14.500z"/><path d="M8 .3 11.7 4H8z"/><path d="M15.300 4.600a.9.900 0 0 1 1.300 0l.9.900a.9.900 0 0 1 0 1.300l-.9.900-2.200-2.200zM13.700 6.200l2.200 2.200-6 6-2.500.4.400-2.500z"/></svg>
<span class="stv" style="left:34.95px">0</span></div>
<div class="st" style="left:630.5px;top:381px"><span class="stl">Commandes</span>
<svg style="left:24.00px;top:12.75px;color:#a3a88a" width="6.80" height="8.50" viewBox="0 0 12 16" preserveAspectRatio="none" fill="currentColor"><path fill-rule="evenodd" d="M0 1.5A1.5 1.5 0 0 1 1.5 0H7V4.2a.8.8 0 0 0 .8.8H12V14.5a1.5 1.5 0 0 1-1.5 1.5h-9A1.5 1.5 0 0 1 0 14.5zM2 2v1h3V2zM2 4v1h3V4zM2 7.300v4.400h8V7.300zM3.200 8.500h5.600v2H3.200zM7 13v1h3v-1z"/><path d="M8 .3 11.7 4H8z"/></svg>
<span class="stv" style="left:33.00px">0</span></div>
<div class="st" style="left:709px;top:381px"><span class="stl">Factures clients</span>
<svg style="left:24.00px;top:12.75px;color:#a3a88a" width="6.80" height="8.50" viewBox="0 0 12 16" preserveAspectRatio="none" fill="currentColor"><path fill-rule="evenodd" d="M0 1.5A1.5 1.5 0 0 1 1.5 0H7V4.2a.8.8 0 0 0 .8.8H12V14.5a1.5 1.5 0 0 1-1.5 1.5h-9A1.5 1.5 0 0 1 0 14.5zM2 2v1h3V2zM2 4v1h3V4zM5.500 6.300v.8C4.600 7.300 4 7.900 4 8.700c0 1.900 3 1.300 3 2.200 0 .6-1.500.6-2.400 0l-.6.900c.4.300 1 .5 1.500.6v.8h1v-.8c1-.2 1.600-.8 1.600-1.600 0-2-3-1.400-3-2.200 0-.5 1.300-.5 2.100 0l.6-.9c-.4-.2-.8-.400-1.300-.5v-.9z"/><path d="M8 .3 11.7 4H8z"/></svg>
<span class="stv" style="left:33.00px">0</span></div>
<div class="st" style="left:473.25px;top:415.9px"><span class="stl">Proposition com...</span>
<svg style="left:22.05px;top:12.75px;color:#5a9ea8" width="10.70" height="8.50" viewBox="0 0 18 16" preserveAspectRatio="none" fill="currentColor"><path d="M0 1.500A1.500 1.500 0 0 1 1.500 0H7V4.200a.8.8 0 0 0 .8.8H12v2.300L7.300 12l-.5 2.900 2.900-.5L12 12.100v2.400a1.500 1.500 0 0 1-1.500 1.500h-9A1.500 1.500 0 0 1 0 14.500z"/><path d="M8 .3 11.7 4H8z"/><path d="M15.300 4.600a.9.900 0 0 1 1.300 0l.9.900a.9.900 0 0 1 0 1.300l-.9.900-2.200-2.200zM13.700 6.200l2.200 2.200-6 6-2.500.4.400-2.500z"/></svg>
<span class="stv" style="left:34.95px">0</span></div>
<div class="st" style="left:552px;top:415.9px"><span class="stl">Commandes fou...</span>
<svg style="left:24.00px;top:12.75px;color:#5a9ea8" width="6.80" height="8.50" viewBox="0 0 12 16" preserveAspectRatio="none" fill="currentColor"><path fill-rule="evenodd" d="M0 1.5A1.5 1.5 0 0 1 1.5 0H7V4.2a.8.8 0 0 0 .8.8H12V14.5a1.5 1.5 0 0 1-1.5 1.5h-9A1.5 1.5 0 0 1 0 14.5zM2 2v1h3V2zM2 4v1h3V4zM2 7.300v4.400h8V7.300zM3.200 8.500h5.600v2H3.200zM7 13v1h3v-1z"/><path d="M8 .3 11.7 4H8z"/></svg>
<span class="stv" style="left:33.00px">0</span></div>
<div class="st" style="left:630.5px;top:415.9px"><span class="stl">Factures fournis...</span>
<svg style="left:24.00px;top:12.75px;color:#5a9ea8" width="6.80" height="8.50" viewBox="0 0 12 16" preserveAspectRatio="none" fill="currentColor"><path fill-rule="evenodd" d="M0 1.5A1.5 1.5 0 0 1 1.5 0H7V4.2a.8.8 0 0 0 .8.8H12V14.5a1.5 1.5 0 0 1-1.5 1.5h-9A1.5 1.5 0 0 1 0 14.5zM2 2v1h3V2zM2 4v1h3V4zM5.500 6.300v.8C4.600 7.300 4 7.900 4 8.700c0 1.900 3 1.300 3 2.200 0 .6-1.500.6-2.400 0l-.6.900c.4.300 1 .5 1.500.6v.8h1v-.8c1-.2 1.600-.8 1.600-1.600 0-2-3-1.400-3-2.200 0-.5 1.300-.5 2.100 0l.6-.9c-.4-.2-.8-.400-1.300-.5v-.9z"/><path d="M8 .3 11.7 4H8z"/></svg>
<span class="stv" style="left:33.00px">0</span></div>
<div class="st" style="left:709px;top:415.9px"><span class="stl">Ticket</span>
<svg style="left:22.10px;top:13.40px;color:#4a9d75" width="10.60" height="7.20" viewBox="0 0 18 12" preserveAspectRatio="none" fill="currentColor"><path fill-rule="evenodd" d="M0 1.500A1.500 1.500 0 0 1 1.500 0h15A1.500 1.500 0 0 1 18 1.500V4a2 2 0 0 0 0 4v2.500a1.500 1.500 0 0 1-1.500 1.500h-15A1.500 1.500 0 0 1 0 10.500V8a2 2 0 0 0 0-4zM3.800 2.700v6.600h10.400V2.700zM5 3.900h8v4.200H5z"/></svg>
<span class="stv" style="left:34.90px">0</span></div>
<div class="bh" style="left:462.5px;top:469.2px;width:322.5px;height:17.4px;line-height:17.4px">Les 5 derniers tickets créés
<svg style="left:299.10px;top:4.70px;color:#8b8d92" width="7.00" height="7.00" viewBox="0 0 16 16" preserveAspectRatio="none" fill="currentColor"><path d="M8 0l3 3.600H8.700v3.700h3.700V5L16 8l-3.600 3V8.700H8.700v3.700H11L8 16l-3-3.600h2.300V8.700H3.600V11L0 8l3.600-3v2.300h3.700V3.600H5z"/></svg>
<svg style="left:311.50px;top:4.70px;color:#8b8d92" width="7.00" height="7.00" viewBox="0 0 16 16" preserveAspectRatio="none" fill="currentColor"><path fill-rule="evenodd" d="M1.500 .5h13A1.500 1.500 0 0 1 16 2v12a1.500 1.500 0 0 1-1.500 1.500h-13A1.500 1.500 0 0 1 0 14V2A1.500 1.500 0 0 1 1.500.5zM4.600 3 3 4.600 6.400 8 3 11.400 4.600 13 8 9.600 11.400 13 13 11.400 9.600 8 13 4.600 11.400 3 8 6.400z"/></svg>
</div>
<div class="row" style="left:462.5px;top:486.6px;width:322.5px"><span style="left:0;width:100%;text-align:center">Pas de ticket non lu</span></div>
<div class="bh" style="left:462.5px;top:521.7px;width:322.5px;height:18.1px;line-height:18.1px">Commandes clients par mois
<svg style="left:287.60px;top:5.35px;color:#8b8d92" width="6.40" height="6.40" viewBox="0 0 16 16" preserveAspectRatio="none" fill="currentColor"><path d="M.6 0h14.800a.6.600 0 0 1 .45 1L10 7.600V15.300a.6.600 0 0 1-1 .5L6.300 13.700a.8.800 0 0 1-.3-.6V7.600L.15 1A.6.600 0 0 1 .6 0z"/></svg>
<svg style="left:299.10px;top:5.05px;color:#8b8d92" width="7.00" height="7.00" viewBox="0 0 16 16" preserveAspectRatio="none" fill="currentColor"><path d="M8 0l3 3.600H8.700v3.700h3.700V5L16 8l-3.600 3V8.700H8.700v3.700H11L8 16l-3-3.600h2.300V8.700H3.600V11L0 8l3.600-3v2.300h3.700V3.600H5z"/></svg>
<svg style="left:311.50px;top:5.05px;color:#8b8d92" width="7.00" height="7.00" viewBox="0 0 16 16" preserveAspectRatio="none" fill="currentColor"><path fill-rule="evenodd" d="M1.500 .5h13A1.500 1.500 0 0 1 16 2v12a1.500 1.500 0 0 1-1.500 1.500h-13A1.500 1.500 0 0 1 0 14V2A1.500 1.500 0 0 1 1.500.5zM4.600 3 3 4.600 6.400 8 3 11.400 4.600 13 8 9.600 11.400 13 13 11.400 9.600 8 13 4.600 11.400 3 8 6.400z"/></svg>
</div>
</div></body></html>
